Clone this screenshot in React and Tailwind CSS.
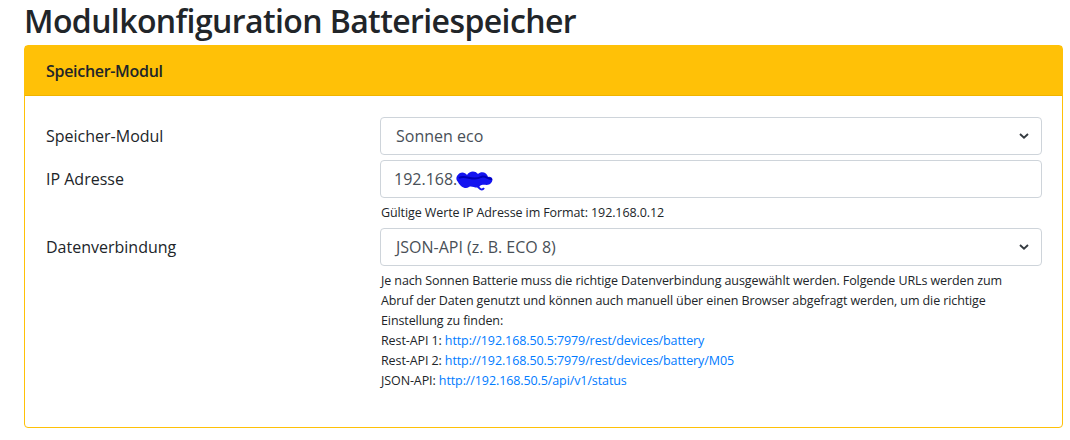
const font = { fontFamily: '"Open Sans", "Noto Sans", sans-serif' }

function SelectBox({ value }) {
  return (
    <div className="relative h-[38px] rounded-[4px] border border-[#ced4da] bg-white flex items-center pl-[15px] pr-8 text-[16px] text-[#495057]">
      <span>{value}</span>
      <svg className="absolute right-[12px] top-1/2 -translate-y-1/2" width="10" height="7" viewBox="0 0 10 7">
        <path d="M1 1.5 L5 5.2 L9 1.5" fill="none" stroke="#343a40" strokeWidth="1.9" />
      </svg>
    </div>
  )
}

function Scribble() {
  return (
    <svg width="40" height="24" viewBox="0 0 40 24" className="-ml-[2px] mt-[4px]">
      <path
        d="M2 7 C5 2, 10 3, 12 6 C14 2, 20 1, 23 5 C26 2, 32 3, 33 8 C37 7, 39 11, 36 14 C33 18, 28 14, 25 17 C22 21, 17 16, 14 18 C10 21, 5 17, 3 13 C1 11, 1 9, 2 7 Z"
        fill="#1414f0"
      />
      <path d="M4 9 C10 5, 18 13, 26 8 C30 6, 34 11, 37 10" stroke="#0000b8" strokeWidth="2" fill="none" />
      <path d="M22 16 C24 20, 27 22, 29 19" stroke="#1414f0" strokeWidth="2" fill="none" />
    </svg>
  )
}

export default function App() {
  return (
    <div className="w-[1070px] h-[440px] bg-white text-[#212529] overflow-hidden" style={font}>
      <h2 className="pl-[24px] pt-[1px] text-[32px] font-semibold leading-[40px] tracking-[-0.6px]">
        Modulkonfiguration Batteriespeicher
      </h2>

      <div className="mx-[24px] mt-[4px] w-[1039px] h-[383px] rounded-[4px] border border-[#ffc107] flex flex-col">
        {/* Header */}
        <div className="h-[50px] bg-[#ffc107] border-b border-[#f0b400] px-[21px] flex items-center text-[16px] font-semibold tracking-[-0.3px]">
          Speicher-Modul
        </div>

        {/* Body */}
        <div className="px-[20px] pt-[21px] flex flex-col gap-[5px]">
          <div className="grid grid-cols-[335px_1fr] items-start">
            <label className="pl-[1px] pt-[7px] text-[16px] leading-[24px]">Speicher-Modul</label>
            <SelectBox value="Sonnen eco" />
          </div>

          <div className="grid grid-cols-[335px_1fr] items-start">
            <label className="pl-[1px] pt-[7px] text-[16px] leading-[24px]">IP Adresse</label>
            <div>
              <div className="h-[38px] rounded-[4px] border border-[#ced4da] bg-white flex items-center pl-[13px] text-[16px] text-[#495057]">
                <span>192.168.</span>
                <Scribble />
              </div>
              <p className="mt-[5px] pl-[1px] text-[12.5px] leading-[20px] tracking-[-0.1px]">
                Gültige Werte IP Adresse im Format: 192.168.0.12
              </p>
            </div>
          </div>

          <div className="grid grid-cols-[335px_1fr] items-start">
            <label className="pl-[1px] pt-[7px] text-[16px] leading-[24px]">Datenverbindung</label>
            <div>
              <SelectBox value="JSON-API (z. B. ECO 8)" />
              <div className="mt-[5px] pl-[1px] text-[12.5px] leading-[20px] tracking-[-0.1px]">
                <p>
                  Je nach Sonnen Batterie muss die richtige Datenverbindung ausgewählt werden. Folgende URLs werden zum
                  <br />
                  Abruf der Daten genutzt und können auch manuell über einen Browser abgefragt werden, um die richtige
                  <br />
                  Einstellung zu finden:
                </p>
                <p>
                  Rest-API 1: <a className="text-[#007bff]">http://192.168.50.5:7979/rest/devices/battery</a>
                </p>
                <p>
                  Rest-API 2: <a className="text-[#007bff]">http://192.168.50.5:7979/rest/devices/battery/M05</a>
                </p>
                <p>
                  JSON-API: <a className="text-[#007bff]">http://192.168.50.5/api/v1/status</a>
                </p>
              </div>
            </div>
          </div>
        </div>
      </div>
    </div>
  )
}
